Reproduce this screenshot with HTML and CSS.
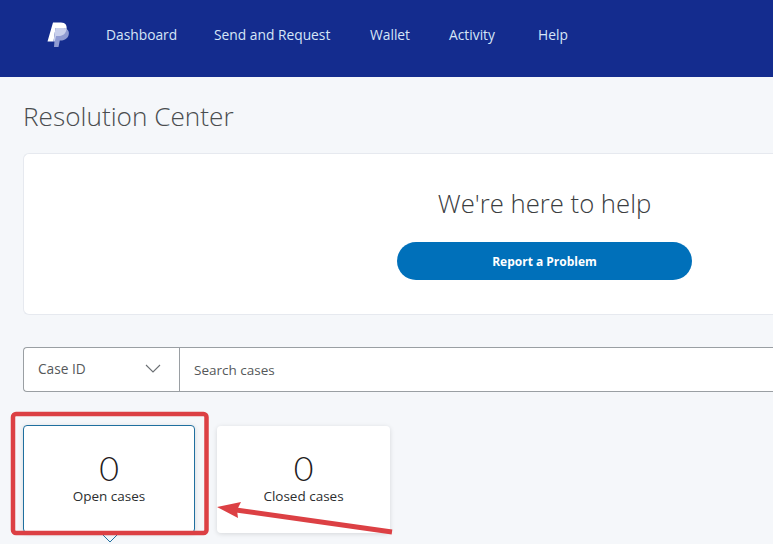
FILE: index.html
```html
<!DOCTYPE html>
<html lang="en">
<head>
<meta charset="utf-8">
<title>Resolution Center</title>
<link rel="stylesheet" href="styles.css">
</head>
<body>
<header class="topbar">
  <svg class="logo" width="24" height="27" viewBox="0 0 24 27">
    <path fill="#8f9bd2" d="M8.500 7 H15 C20.500 7 23 10 21.500 14.500 C20.300 18 17 19.500 13.800 19.500 H12.800 L11.500 26 H7 Z"/>
    <path fill="#ffffff" d="M6 1.500 H14 C18.500 1.500 20.500 4.500 19.400 9 C18.600 6.500 16 7 14 7 H8.500 L6.500 20.500 H0.500 Z"/>
    <path fill="#c9d0ec" d="M8.500 7 H14 C16 7 18.600 6.500 19.400 9 C18.300 13.500 15 15 11.500 15 H9 L7.800 20.500 H6.500 Z"/>
  </svg>
  <nav class="nav">
    <a class="nav-link">Dashboard</a>
    <a class="nav-link">Send and Request</a>
    <a class="nav-link">Wallet</a>
    <a class="nav-link">Activity</a>
    <a class="nav-link">Help</a>
  </nav>
</header>
<main class="content">
  <h1 class="title">Resolution Center</h1>
  <section class="hero">
    <h2 class="hero-title">We're here to help</h2>
    <button class="cta">Report a Problem</button>
  </section>
  <div class="search">
    <div class="select">
      <span>Case ID</span>
      <svg width="16" height="9" viewBox="0 0 16 9"><path d="M1 1 L8 8 L15 1" fill="none" stroke="#6b6f73" stroke-width="1.100"/></svg>
    </div>
    <div class="search-input">Search cases</div>
  </div>
  <div class="cards">
    <div class="card card-active">
      <div class="count">0</div>
      <div class="label">Open cases</div>
    </div>
    <div class="card">
      <div class="count">0</div>
      <div class="label">Closed cases</div>
    </div>
  </div>
</main>
<svg class="notch" width="16" height="9" viewBox="0 0 16 9"><path d="M1 1 L8 8 L15 1" fill="none" stroke="#1f6f9f" stroke-width="1"/></svg>
<svg class="annotation" width="773" height="544" viewBox="0 0 773 544">
  <rect x="13" y="414" width="193.500" height="119" rx="3" fill="none" stroke="#dc4044" stroke-width="4.500"/>
  <path d="M392 532 L236 510" fill="none" stroke="#dc4044" stroke-width="5"/>
  <path d="M217 507 L241 502 L237 510 L238 518 Z" fill="#dc4044"/>
</svg>
</body>
</html>
```
FILE: styles.css
```css
* { box-sizing: border-box; }
html, body { margin: 0; height: 544px; overflow: hidden; }
body {
  position: relative;
  background: #f5f7fa;
  font-family: "Open Sans", sans-serif;
  color: #2c2e2f;
}
.topbar {
  height: 77px;
  background: #142c8e;
  display: flex;
  align-items: center;
  padding: 0 0 8px 47px;
}
.logo { flex: none; margin-right: 35px; }
.nav { display: grid; grid-template-columns: 108px 156px 79px 89px auto; }
.nav-link { color: #d6e6f7; font-size: 13.800px; white-space: nowrap; }
.content { padding: 0 0 0 23px; }
.title {
  margin: 21px 0 0;
  height: 55px;
  font-size: 26.200px;
  line-height: 36px;
  font-weight: 300;
  color: #4a4d4f;
}
.hero {
  height: 162px;
  background: #fff;
  border: 1px solid #e6e9ef;
  border-right: 0;
  border-radius: 6px 0 0 6px;
  display: flex;
  flex-direction: column;
  align-items: center;
  padding: 31px 0 0 292px;
}
.hero-title {
  margin: 0 0 19px;
  font-size: 25.700px;
  line-height: 38px;
  font-weight: 300;
  color: #3b3d3f;
}
.cta {
  width: 295px;
  height: 38px;
  flex: none;
  border: 0;
  border-radius: 19px;
  background: #0070ba;
  color: #fff;
  font-family: "Open Sans", sans-serif;
  font-size: 12px;
  font-weight: 700;
}
.search {
  margin-top: 32px;
  height: 45px;
  display: flex;
  background: #fff;
  border: 1px solid #9a9fa3;
  border-right: 0;
  border-radius: 4px 0 0 4px;
}
.select {
  width: 156px;
  flex: none;
  display: flex;
  align-items: center;
  justify-content: space-between;
  padding: 0 18px 2px 14px;
  border-right: 1px solid #9a9fa3;
  font-size: 13.700px;
  color: #55585a;
}
.search-input {
  flex: 1;
  display: flex;
  align-items: center;
  padding: 1px 0 0 14px;
  font-size: 13.500px;
  color: #55585a;
}
.cards {
  margin-top: 33px;
  display: flex;
  align-items: flex-start;
  gap: 22px;
}
.card {
  width: 173px;
  height: 107px;
  margin-top: 1px;
  background: #fff;
  border-radius: 4px;
  box-shadow: 0 1px 5px rgba(0, 0, 0, 0.13);
  text-align: center;
  padding-top: 22px;
}
.card-active {
  width: 172px;
  height: 108px;
  margin-top: 0;
  border: 1px solid #1f6f9f;
  padding-top: 22px;
}
.count { font-family: "Lato", sans-serif; font-size: 34px; line-height: 39px; font-weight: 300; color: #1f2021; }
.label { font-size: 13.500px; line-height: 18px; color: #2c2e2f; }
.notch { position: absolute; left: 102px; top: 534px; }
.annotation { position: absolute; left: 0; top: 0; }
```
